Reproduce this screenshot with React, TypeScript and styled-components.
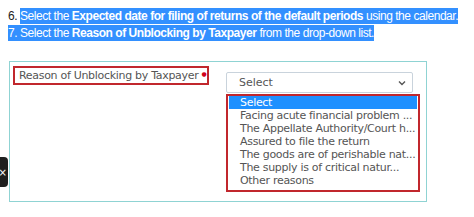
import React from 'react';
import styled, { createGlobalStyle } from 'styled-components';

const GlobalStyle = createGlobalStyle`
    html, body {
        margin: 0;
        padding: 0;
        background: #ffffff;
    }
    body {
        width: 474px;
        height: 217px;
        overflow: hidden;
        position: relative;
    }
`;

const Page = styled.div`
    width: 474px;
    height: 217px;
    padding: 9px 0 0 8px;
    box-sizing: border-box;
`;

const Steps = styled.div`
    font-family: 'Liberation Sans', Arial, sans-serif;
    font-size: 12px;
    letter-spacing: -0.45px;
    color: #222;
    display: flex;
    flex-direction: column;
    gap: 2px;
`;

const Step = styled.div`
    line-height: 15px;
    white-space: nowrap;
`;

const Hl = styled.span`
    background: #3390ff;
    color: #ffffff;
    padding: 1px 0;
`;

const Panel = styled.div`
    margin: 20px 0 0 1px;
    width: 418px;
    height: 141px;
    box-sizing: border-box;
    border: 1px solid #8fd3d3;
    padding: 4px 0 0 3px;
    display: flex;
    gap: 17px;
    font-family: 'DejaVu Sans', Verdana, sans-serif;
    font-size: 11px;
    color: #555;
`;

const LabelBox = styled.div`
    width: 196px;
    height: 19px;
    box-sizing: border-box;
    border: 2px solid #c1272d;
    padding: 0 0 0 4px;
    display: flex;
    align-items: center;
    white-space: nowrap;
    font-size: 11px;
    letter-spacing: -0.3px;
`;

const Star = styled.span`
    color: #d0021b;
    font-size: 6px;
    margin-left: 3px;
    align-self: flex-start;
    margin-top: 2px;
`;

const SelectCol = styled.div`
    display: flex;
    flex-direction: column;
    padding-top: 6px;
`;

const SelectBox = styled.div`
    width: 187px;
    height: 21px;
    box-sizing: border-box;
    border: 1px solid #c9d3dc;
    border-radius: 2px;
    display: flex;
    align-items: center;
    justify-content: space-between;
    padding: 0 6px 0 12px;
    color: #555;
`;

const List = styled.div`
    margin-top: 1px;
    width: 194px;
    height: 98px;
    box-sizing: border-box;
    border: 2px solid #c1272d;
    padding: 0 1px;
    display: flex;
    flex-direction: column;
    letter-spacing: -0.3px;
`;

const Option = styled.div<{ active?: boolean }>`
    height: 13px;
    line-height: 13px;
    padding-left: 11px;
    white-space: nowrap;
    background: ${({ active }) => (active ? '#1e90ff' : 'transparent')};
    color: ${({ active }) => (active ? '#ffffff' : '#555')};
`;

const CloseTab = styled.div`
    position: absolute;
    left: -6px;
    top: 157px;
    width: 14px;
    height: 30px;
    background: #1f1f1f;
    border-radius: 4px;
    color: #fff;
    font-family: 'DejaVu Sans', sans-serif;
    font-size: 10px;
    display: flex;
    align-items: center;
    justify-content: flex-end;
    padding-right: 1px;
    box-sizing: border-box;
`;

const options = [
    'Select',
    'Facing acute financial problem ...',
    'The Appellate Authority/Court h...',
    'Assured to file the return',
    'The goods are of perishable nat...',
    'The supply is of critical natur...',
    'Other reasons',
];

export default function App() {
    return (
        <>
            <GlobalStyle />
            <Page>
                <Steps>
                    <Step>
                        6. <Hl>Select the <b>Expected date for filing of returns of the default periods</b> using the calendar.</Hl>
                    </Step>
                    <Step>
                        <Hl>7. Select the <b>Reason of Unblocking by Taxpayer</b> from the drop-down list.</Hl>
                    </Step>
                </Steps>
                <Panel>
                    <LabelBox>
                        Reason of Unblocking by Taxpayer<Star>●</Star>
                    </LabelBox>
                    <SelectCol>
                        <SelectBox>
                            <span>Select</span>
                            <svg width="8" height="6" viewBox="0 0 8 6">
                                <path d="M1 1.5 L4 4.5 L7 1.5" stroke="#555" strokeWidth="1.4" fill="none" />
                            </svg>
                        </SelectBox>
                        <List>
                            {options.map((o, i) => (
                                <Option key={o} active={i === 0}>{o}</Option>
                            ))}
                        </List>
                    </SelectCol>
                </Panel>
            </Page>
            <CloseTab>×</CloseTab>
        </>
    );
}
